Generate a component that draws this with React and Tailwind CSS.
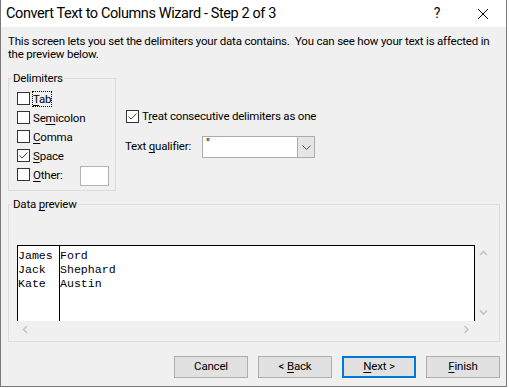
import React from 'react';

const Check = ({ checked }) => (
  <span className="w-[13px] h-[13px] shrink-0 border border-[#333333] bg-white flex items-center justify-center">
    {checked && (
      <svg width="11" height="11" viewBox="0 0 11 11">
        <path d="M1.5 5.5 L4 8 L9.5 2.5" fill="none" stroke="#444" strokeWidth="1" />
      </svg>
    )}
  </span>
);

const U = ({ children }) => <span className="underline underline-offset-2">{children}</span>;

const Chevron = ({ dir }) => {
  const paths = {
    up: 'M1 5 L4.5 1.5 L8 5',
    down: 'M1 1.5 L4.5 5 L8 1.5',
    left: 'M5 1 L1.5 4.5 L5 8',
    right: 'M1.5 1 L5 4.5 L1.5 8',
  };
  const vertical = dir === 'up' || dir === 'down';
  return (
    <svg width={vertical ? 9 : 7} height={vertical ? 7 : 9} viewBox={vertical ? '0 0 9 7' : '0 0 7 9'}>
      <path d={paths[dir]} fill="none" stroke="#c4c4c4" strokeWidth="1.6" />
    </svg>
  );
};

const DelimRow = ({ checked, children, focus }) => (
  <div className="h-[19px] flex items-center">
    <Check checked={checked} />
    <span
      className={
        'ml-[2px] leading-[14px] border ' +
        (focus ? 'border-dotted border-black' : 'border-transparent')
      }
    >
      {children}
    </span>
  </div>
);

const Button = ({ children, primary }) => (
  <div
    className={
      'w-[74px] h-[22px] bg-[#e1e1e1] flex items-center justify-center ' +
      (primary ? 'border-2 border-[#0078d7]' : 'border border-[#adadad]')
    }
  >
    <span className="whitespace-pre">{children}</span>
  </div>
);

export default function App() {
  const rows = [
    ['James', 'Ford'],
    ['Jack', 'Shephard'],
    ['Kate', 'Austin'],
  ];

  return (
    <div className="w-[509px] h-[388px] bg-white overflow-hidden">
      <div className="w-[507px] h-[387px] flex flex-col border-x border-b border-[#7a7a7a] bg-[#f0f0f0] text-black text-[11.5px] tracking-[-0.2px] font-['Roboto','Noto_Sans',sans-serif]">
        {/* title bar */}
        <div className="h-[27px] shrink-0 bg-white flex items-center">
          <span className="pl-[5px] text-[14.5px] tracking-[-0.4px] leading-[20px] whitespace-nowrap">
            Convert Text to Columns Wizard - Step 2 of 3
          </span>
          <div className="ml-auto flex h-full">
            <div className="w-[46px] flex items-center justify-center text-[14px]">?</div>
            <div className="w-[46px] flex items-center justify-center">
              <svg width="10" height="10" viewBox="0 0 10 10">
                <path d="M0 0 L10 10 M10 0 L0 10" stroke="#000" strokeWidth="1" />
              </svg>
            </div>
          </div>
        </div>

        <div className="flex flex-col pl-[7px] pr-[6px]">
          <p className="mt-[8px] leading-[13px] whitespace-pre">
            {'This screen lets you set the delimiters your data contains.  You can see how your text is affected in\nthe preview below.'}
          </p>

          <div className="mt-[17px] flex">
            {/* Delimiters group */}
            <div className="relative w-[108px] h-[113px] border border-[#dcdcdc] pt-[10px] pl-[8px]">
              <span className="absolute -top-[8px] left-[3px] bg-[#f0f0f0] px-[1px] leading-[15px]">Delimiters</span>
              <DelimRow focus>
                <U>T</U>ab
              </DelimRow>
              <DelimRow>
                Se<U>m</U>icolon
              </DelimRow>
              <DelimRow>
                <U>C</U>omma
              </DelimRow>
              <DelimRow checked>
                <U>S</U>pace
              </DelimRow>
              <div className="h-[19px] flex items-center">
                <Check />
                <span className="ml-[2px] leading-[14px] border border-transparent">
                  <U>O</U>ther:
                </span>
                <div className="ml-auto mr-[6px] mt-[3px] w-[29px] h-[20px] bg-white border border-[#b4b4b4]" />
              </div>
            </div>

            {/* options */}
            <div className="ml-[10px] pt-[29px] flex flex-col">
              <div className="h-[19px] flex items-center">
                <Check checked />
                <span className="ml-[3px] whitespace-nowrap">
                  T<U>r</U>eat consecutive delimiters as one
                </span>
              </div>
              <div className="mt-[10px] flex items-center">
                <span className="w-[77px] -ml-[1px] whitespace-nowrap">
                  Text <U>q</U>ualifier:
                </span>
                <div className="w-[113px] h-[22px] bg-white border border-[#acacac] flex">
                  <span className="flex-1 pl-[3px] leading-[14px] text-[12px]">"</span>
                  <div className="w-[17px] bg-[#e5e5e5] border-l border-[#acacac] flex items-center justify-center">
                    <svg width="9" height="5" viewBox="0 0 9 5">
                      <path d="M0.5 0.5 L4.5 4.5 L8.5 0.5" fill="none" stroke="#555" strokeWidth="1" />
                    </svg>
                  </div>
                </div>
              </div>
            </div>
          </div>

          {/* Data preview */}
          <div className="relative mt-[13px] w-[492px] h-[138px] border border-[#dcdcdc] pl-[8px] pt-[40px]">
            <span className="absolute -top-[8px] left-[3px] bg-[#f0f0f0] px-[1px] leading-[15px]">
              Data <U>p</U>review
            </span>
            <div className="grid grid-cols-[458px_17px] grid-rows-[76px_17px]">
              <div className="bg-white border-t border-x border-black flex font-['Liberation_Mono','Courier_New',monospace] text-[11.6px] tracking-normal leading-[14px]">
                <div className="w-[42px] border-r border-black pt-[3px]">
                  {rows.map((r) => (
                    <div key={r[0]}>{r[0]}</div>
                  ))}
                </div>
                <div className="pt-[3px]">
                  {rows.map((r) => (
                    <div key={r[1]}>{r[1]}</div>
                  ))}
                </div>
              </div>
              <div className="flex flex-col justify-between">
                <div className="h-[17px] flex items-center justify-center">
                  <Chevron dir="up" />
                </div>
                <div className="h-[17px] flex items-center justify-center">
                  <Chevron dir="down" />
                </div>
              </div>
              <div className="flex justify-between">
                <div className="w-[17px] flex items-center justify-center">
                  <Chevron dir="left" />
                </div>
                <div className="w-[17px] flex items-center justify-center">
                  <Chevron dir="right" />
                </div>
              </div>
              <div />
            </div>
          </div>

          {/* buttons */}
          <div className="mt-[14px] flex justify-end gap-[10px]">
            <Button>Cancel</Button>
            <Button>
              {'< '}
              <U>B</U>ack
            </Button>
            <Button primary>
              <U>N</U>
              {'ext >'}
            </Button>
            <Button>
              <U>F</U>inish
            </Button>
          </div>
        </div>
      </div>
    </div>
  );
}
